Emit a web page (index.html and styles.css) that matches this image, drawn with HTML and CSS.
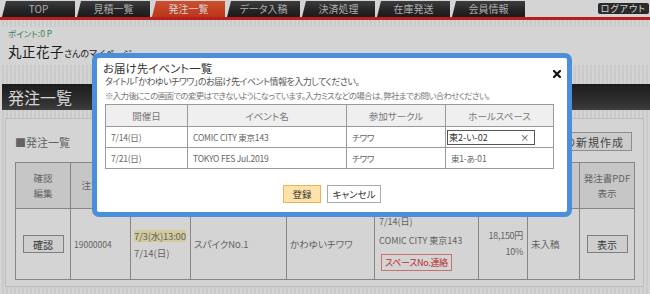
FILE: index.html
```html
<!DOCTYPE html>
<html lang="ja">
<head>
    <meta charset="UTF-8">
    <meta name="viewport" content="width=device-width, initial-scale=1.0">
    <title>発注一覧 - マイページ</title>
    <link rel="stylesheet" href="styles.css">
</head>
<body>
    <div class="header">
        <ul class="tabs">
            <li>TOP</li>
            <li>見積一覧</li>
            <li class="active">発注一覧</li>
            <li>データ入稿</li>
            <li>決済処理</li>
            <li>在庫発送</li>
            <li>会員情報</li>
        </ul>
        <a class="logout">ログアウト</a>
    </div>

    <div class="user">
        <p class="point">ポイント:0 P</p>
        <p class="name">丸正花子<span>さんのマイページ</span></p>
    </div>

    <h1 class="page-title">発注一覧</h1>

    <div class="panel">
        <div class="panel-head">
            <h2>■発注一覧</h2>
            <button class="btn-new">発注書の新規作成</button>
        </div>

        <table class="orders">
            <colgroup>
                <col style="width:55px"><col style="width:60px"><col style="width:60px">
                <col style="width:96px"><col style="width:88px"><col style="width:104px">
                <col style="width:49px"><col style="width:52px"><col style="width:55px">
            </colgroup>
            <thead>
                <tr>
                    <th>確認<br>編集</th>
                    <th>注文番号</th>
                    <th>入稿期限<br>発送日</th>
                    <th>商品名</th>
                    <th></th>
                    <th>お届け先</th>
                    <th>金額<br>割引</th>
                    <th>状態</th>
                    <th>発注書PDF<br>表示</th>
                </tr>
            </thead>
            <tbody>
                <tr>
                    <td class="center"><button class="btn-sm">確認</button></td>
                    <td class="num">19000004</td>
                    <td>
                        <div class="deadline">7/3(水)13:00</div>
                        <div class="ship">7/14(日)</div>
                    </td>
                    <td>スパイクNo.1</td>
                    <td>かわゆいチワワ</td>
                    <td class="event">
                        <div>7/14(日)</div>
                        <div>COMIC CITY 東京143</div>
                        <span class="btn-space">スペースNo.連絡</span>
                    </td>
                    <td class="price">
                        <div>18,150円</div>
                        <div>10%</div>
                    </td>
                    <td>未入稿</td>
                    <td class="center"><button class="btn-sm">表示</button></td>
                </tr>
            </tbody>
        </table>
    </div>

    <div class="overlay"></div>

    <div class="modal">
        <button class="modal-close" aria-label="閉じる">
            <svg width="8" height="8" viewBox="0 0 8 8"><path d="M1 1L7 7M7 1L1 7" stroke="#111" stroke-width="2.2" stroke-linecap="square"/></svg>
        </button>
        <h3>お届け先イベント一覧</h3>
        <p class="lead">タイトル「かわゆいチワワ」のお届け先イベント情報を入力してください。</p>
        <p class="note">※入力後にこの画面での変更はできないようになっています。入力ミスなどの場合は、弊社までお問い合わせください。</p>

        <table class="events">
            <colgroup>
                <col style="width:82px"><col style="width:159px"><col style="width:99px"><col style="width:108px">
            </colgroup>
            <thead>
                <tr><th>開催日</th><th>イベント名</th><th>参加サークル</th><th>ホールスペース</th></tr>
            </thead>
            <tbody>
                <tr>
                    <td>7/14(日)</td>
                    <td>COMIC CITY 東京143</td>
                    <td>チワワ</td>
                    <td class="input-cell">
                        <div class="space-input">
                            <input type="text" value="東2-い-02">
                            <span class="clear">×</span>
                        </div>
                    </td>
                </tr>
                <tr>
                    <td>7/21(日)</td>
                    <td>TOKYO FES Jul.2019</td>
                    <td>チワワ</td>
                    <td>東1-あ-01</td>
                </tr>
            </tbody>
        </table>

        <div class="actions">
            <button class="btn-submit">登録</button>
            <button class="btn-cancel">キャンセル</button>
        </div>
    </div>
</body>
</html>
```

FILE: styles.css
```css
* {
    box-sizing: border-box;
}

body {
    margin: 0;
    width: 650px;
    height: 294px;
    overflow: hidden;
    position: relative;
    font-family: "Noto Sans CJK JP", sans-serif;
    font-feature-settings: "palt";
    color: #666;
    background: repeating-linear-gradient(90deg, #fff 0 2px, #f3f3f3 2px 4px);
}

button {
    font-family: inherit;
    font-feature-settings: "palt";
    cursor: pointer;
}

/* Header tabs */
.header {
    display: flex;
    align-items: flex-start;
    height: 20px;
    padding-left: 2px;
    border-bottom: 3px solid #df2626;
    background: #fff;
}

.tabs {
    display: flex;
    gap: 2px;
    list-style: none;
    margin: 0;
    padding: 1px 0 0;
}

.tabs li {
    width: 73px;
    height: 16px;
    line-height: 16px;
    text-align: center;
    font-size: 10px;
    color: #d0d0d0;
    background: linear-gradient(#4a4a4a, #2c2c2c 60%, #222);
    clip-path: polygon(4px 0, 100% 0, 100% 100%, 0 100%);
}

.tabs li.active {
    color: #fff;
    background: linear-gradient(#f4603a, #e2401f);
}

.logout {
    margin: 3px 1px 0 auto;
    height: 11px;
    padding: 0 3px;
    border-radius: 2px;
    background: #333;
    color: #fff;
    font-size: 9px;
    line-height: 11px;
    letter-spacing: 1px;
}

/* User info */
.user {
    padding: 0 8px;
    background: #fff;
}

.point {
    margin: 7px 0 0;
    font-size: 8.5px;
    line-height: 13px;
    color: #4f9a68;
}

.name {
    margin: 0;
    font-size: 13.5px;
    line-height: 23px;
    letter-spacing: 0.5px;
    color: #222;
}

.name span {
    font-size: 9px;
    letter-spacing: 0;
}

.page-title {
    margin: 19px 0 0 2px;
    height: 26px;
    padding-left: 6px;
    font-size: 16px;
    font-weight: normal;
    line-height: 26px;
    color: #fff;
    background: linear-gradient(#222, #3a3a3a 70%, #4a4a4a);
}

/* Order panel */
.panel {
    margin: 8px 6px 0 5px;
    padding: 13px 9px 6px;
    border: 1px solid #e2e2e2;
    background: #fff;
}

.panel-head {
    display: flex;
    justify-content: space-between;
    align-items: center;
    height: 19px;
    margin-bottom: 11px;
}

.panel-head h2 {
    margin: 0;
    font-size: 11px;
    font-weight: normal;
    color: #777;
}

.btn-new {
    height: 19px;
    margin-right: 2px;
    padding: 0 7px;
    border: 1px solid #aaa;
    background: #f6f6f6;
    font-size: 11px;
    letter-spacing: 1px;
    color: #555;
}

.orders {
    width: 619px;
    border-collapse: collapse;
    table-layout: fixed;
}

.orders th,
.orders td {
    border: 1px solid #a2a2a2;
    font-size: 9.5px;
    color: #777;
}

.orders th {
    height: 46px;
    font-weight: normal;
    line-height: 15px;
    background: #eeeeee;
}

.orders td {
    height: 71px;
    padding: 0 3px;
    background: #fff;
    white-space: nowrap;
}

.orders td.center {
    text-align: center;
}

.orders td.num {
    font-size: 8.5px;
}

.btn-sm {
    width: 41px;
    height: 18px;
    padding: 0;
    border: 1px solid #999;
    background: #f8f8f8;
    font-size: 10px;
    color: #444;
}

.deadline {
    display: inline-block;
    line-height: 12px;
    letter-spacing: -0.2px;
    background: #fff4bc;
}

.ship {
    margin-top: 3px;
    line-height: 14px;
}

.orders td.event {
    vertical-align: top;
    padding: 3px 4px 0;
    font-size: 9px;
    line-height: 19px;
}

.btn-space {
    display: inline-block;
    margin: 4px 0 0 2px;
    height: 17px;
    padding: 0 3px;
    border: 1px solid #ee8a8a;
    line-height: 15px;
    font-size: 9px;
    letter-spacing: -0.3px;
    color: #e03434;
}

.orders td.price {
    text-align: right;
    padding-right: 4px;
    font-size: 9px;
    letter-spacing: -0.3px;
    line-height: 16px;
}

/* Modal */
.overlay {
    position: absolute;
    inset: 0;
    background: rgba(0, 0, 0, 0.17);
}

.modal {
    position: absolute;
    left: 92px;
    top: 53px;
    width: 480px;
    padding: 3px 8px 9px;
    border: 5px solid #4b8fdc;
    border-radius: 7px;
    background: #fff;
    color: #555;
}

.modal-close {
    position: absolute;
    top: 11px;
    right: 6px;
    width: 9px;
    height: 9px;
    padding: 0;
    border: none;
    background: none;
    line-height: 0;
}

.modal h3 {
    margin: 0 0 0 -2px;
    font-size: 11.5px;
    font-weight: normal;
    line-height: 14px;
    color: #333;
}

.lead {
    margin: 0;
    font-size: 9px;
    letter-spacing: -0.5px;
    line-height: 14px;
}

.note {
    margin: 0 0 3px;
    font-size: 8.5px;
    letter-spacing: -0.7px;
    line-height: 12px;
    color: #777;
}

.events {
    width: 448px;
    border-collapse: collapse;
    table-layout: fixed;
}

.events th,
.events td {
    border: 1px solid #9a9a9a;
    color: #666;
}

.events th {
    height: 22px;
    font-size: 9.5px;
    font-weight: normal;
    color: #777;
    background: #efefef;
}

.events td {
    height: 21px;
    padding: 0 5px;
    font-size: 8.5px;
    letter-spacing: -0.2px;
    white-space: nowrap;
}

.events td.input-cell {
    padding: 0 1px;
}

.space-input {
    display: flex;
    align-items: center;
    width: 88px;
    height: 15px;
    padding: 0 5px 0 1px;
    border: 1px solid #555;
}

.space-input input {
    flex: 1;
    width: 0;
    height: 13px;
    padding: 0;
    border: none;
    outline: none;
    font-family: inherit;
    font-feature-settings: "palt";
    font-size: 9px;
    color: #333;
}

.clear {
    font-size: 9px;
    line-height: 13px;
    color: #333;
}

.actions {
    display: flex;
    justify-content: center;
    gap: 6px;
    margin-top: 16px;
}

.actions button {
    height: 18px;
    padding: 0;
    font-size: 9.5px;
    color: #333;
}

.btn-submit {
    width: 38px;
    border: 1px solid #e8b35a;
    background: #fde3a8;
}

.btn-cancel {
    width: 54px;
    border: 1px solid #aaa;
    background: #fff;
}
```
